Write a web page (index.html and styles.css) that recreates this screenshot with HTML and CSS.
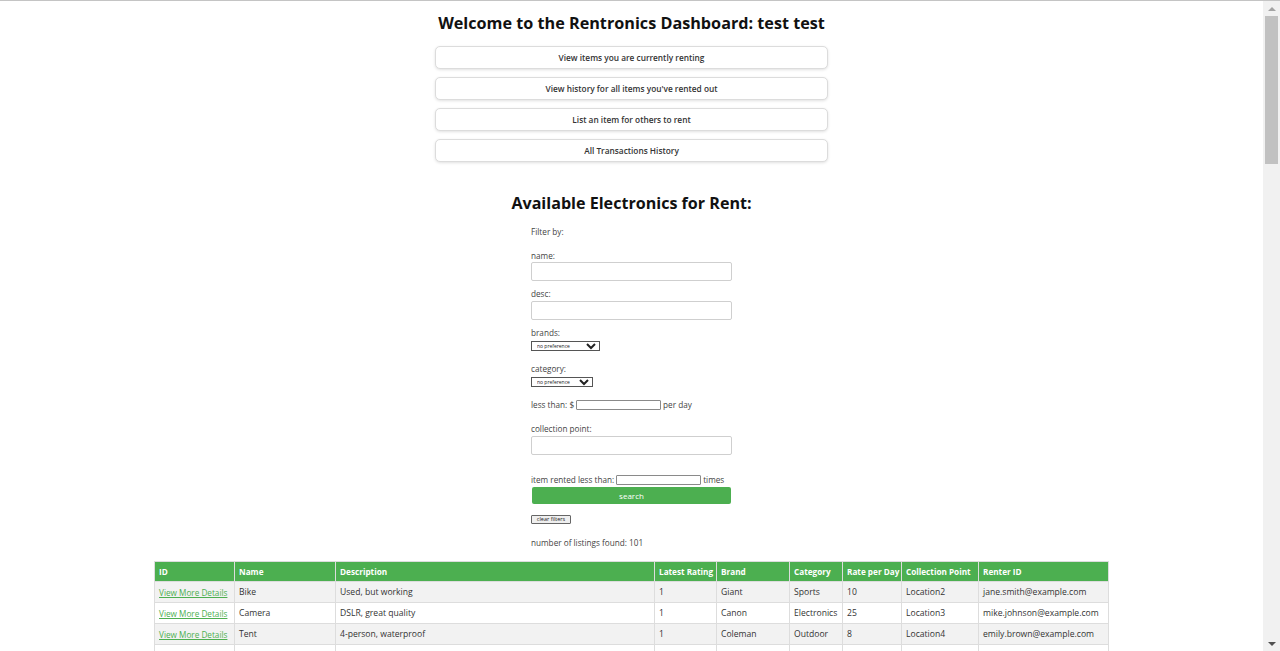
FILE: index.html
```html
<!DOCTYPE html>
<html lang="en">
<head>
<meta charset="utf-8">
<title>Rentronics Dashboard</title>
<link rel="stylesheet" href="styles.css">
</head>
<body>
<div class="page">
  <h1 class="title">Welcome to the Rentronics Dashboard: test test</h1>
  <div class="nav">
    <button class="nav-btn">View items you are currently renting</button>
    <button class="nav-btn">View history for all items you've rented out</button>
    <button class="nav-btn">List an item for others to rent</button>
    <button class="nav-btn">All Transactions History</button>
  </div>
  <h2 class="subtitle">Available Electronics for Rent:</h2>
  <form class="filters">
    <div class="filter-title">Filter by:</div>
    <div class="lbl g-name">name:</div>
    <input class="txt" type="text">
    <div class="lbl g-desc">desc:</div>
    <input class="txt" type="text">
    <div class="lbl g-brands">brands:</div>
    <select class="sel sel-brands"><option>no preference</option></select>
    <div class="lbl g-cat">category:</div>
    <select class="sel sel-cat"><option>no preference</option></select>
    <div class="row g-less">less than: $ <input class="small" type="text"> per day</div>
    <div class="lbl g-coll">collection point:</div>
    <input class="txt" type="text">
    <div class="row g-item">item rented less than: <input class="small" type="text"> times</div>
    <button type="button" class="search">search</button>
    <div class="clear-wrap"><button type="button" class="clear">clear filters</button></div>
    <div class="count">number of listings found: 101</div>
  </form>
  <table class="listings">
    <colgroup>
      <col class="c-id"><col class="c-name"><col class="c-desc"><col class="c-rate"><col class="c-brand"><col class="c-cat"><col class="c-day"><col class="c-coll"><col class="c-renter">
    </colgroup>
    <thead>
      <tr><th>ID</th><th>Name</th><th>Description</th><th>Latest Rating</th><th>Brand</th><th>Category</th><th>Rate per Day</th><th>Collection Point</th><th>Renter ID</th></tr>
    </thead>
    <tbody>
      <tr><td><a href="#">View More Details</a></td><td>Bike</td><td>Used, but working</td><td>1</td><td>Giant</td><td>Sports</td><td>10</td><td>Location2</td><td>jane.smith@example.com</td></tr>
      <tr><td><a href="#">View More Details</a></td><td>Camera</td><td>DSLR, great quality</td><td>1</td><td>Canon</td><td>Electronics</td><td>25</td><td>Location3</td><td>mike.johnson@example.com</td></tr>
      <tr><td><a href="#">View More Details</a></td><td>Tent</td><td>4-person, waterproof</td><td>1</td><td>Coleman</td><td>Outdoor</td><td>8</td><td>Location4</td><td>emily.brown@example.com</td></tr>
      <tr><td><a href="#">View More Details</a></td><td>Laptop</td><td>Fast, 16GB RAM</td><td>1</td><td>Dell</td><td>Electronics</td><td>30</td><td>Location5</td><td>john.doe@example.com</td></tr>
    </tbody>
  </table>
</div>
<div class="scrollbar">
  <div class="sb-btn"><span class="arrow-up"></span></div>
  <div class="sb-thumb"></div>
  <div class="sb-track"></div>
  <div class="sb-btn"><span class="arrow-down"></span></div>
</div>
</body>
</html>
```

FILE: styles.css
```css
* { box-sizing: border-box; }
html, body { margin: 0; padding: 0; }
body {
  height: 100vh;
  overflow: hidden;
  display: flex;
  border-top: 1px solid #c4c4c4;
  background: #fff;
  font-family: "Open Sans", "Liberation Sans", sans-serif;
  color: #333;
}
.page {
  flex: 1;
  min-width: 0;
  overflow: hidden;
  display: flex;
  flex-direction: column;
  align-items: center;
}
.title {
  margin: 11px 0 0;
  font-size: 16.2px;
  line-height: 22px;
  font-weight: 700;
  color: #111;
}
.nav {
  margin-top: 12px;
  display: flex;
  flex-direction: column;
  gap: 8px;
}
.nav-btn {
  width: 393px;
  height: 23px;
  background: #fff;
  border: 1px solid #dcdcdc;
  border-radius: 5px;
  box-shadow: 0 1px 3px rgba(0,0,0,0.12);
  font-family: inherit;
  font-size: 8.3px;
  font-weight: 600;
  color: #333;
  padding: 0;
}
.subtitle {
  margin: 30px 0 0;
  font-size: 16.1px;
  line-height: 22px;
  font-weight: 700;
  color: #111;
}
.filters {
  width: 201px;
  display: flex;
  flex-direction: column;
  align-items: flex-start;
  font-size: 8.2px;
  color: #444;
}
.filter-title, .lbl, .row, .count { line-height: 12px; height: 12px; white-space: nowrap; }
.filter-title { margin-top: 12px; }
.g-name { margin-top: 12px; }
.g-desc { margin-top: 7px; }
.g-brands { margin-top: 7px; }
.g-cat { margin-top: 12px; }
.g-less { margin-top: 12px; display: flex; align-items: center; gap: 2px; }
.g-coll { margin-top: 12px; }
.g-item { margin-top: 19px; display: flex; align-items: center; gap: 2px; }
.txt {
  width: 201px;
  height: 19px;
  border: 1px solid #cfcfcf;
  border-radius: 2px;
  background: #fff;
  margin: 0;
}
.g-desc + .txt { margin-top: 1px; }
.g-coll + .txt { margin-top: 1px; }
.sel {
  margin-top: 2px;
  height: 10px;
  font-family: inherit;
  font-size: 5px;
  padding: 0 1px;
  border: 1px solid #555;
  border-radius: 0;
  background: #fff;
  color: #222;
}
.sel-brands { width: 69px; }
.sel-cat { width: 62px; }
.small {
  width: 85px;
  height: 10px;
  border: 1px solid #8a8a8a;
  border-radius: 1px;
  margin: 0;
  padding: 0;
}
.search {
  margin-top: 1px;
  margin-left: 1px;
  width: 199px;
  height: 17px;
  background: #4caf50;
  color: #fff;
  border: none;
  border-radius: 2px;
  font-family: inherit;
  font-size: 8px;
  padding: 0;
}
.clear-wrap { margin-top: 11px; height: 9px; display: flex; }
.clear {
  width: 40px;
  height: 9px;
  padding: 0;
  font-family: inherit;
  font-size: 5.5px;
  line-height: 7px;
  border: 1px solid #666;
  border-radius: 1px;
  background: #efefef;
  color: #222;
}
.count { margin-top: 13px; }
.listings {
  margin-top: 12px;
  width: 954px;
  border-collapse: collapse;
  table-layout: fixed;
  font-size: 8.6px;
  color: #333;
}
.c-id { width: 80px; }
.c-name { width: 101px; }
.c-desc { width: 319px; }
.c-rate { width: 62px; }
.c-brand { width: 73px; }
.c-cat { width: 53px; }
.c-day { width: 59px; }
.c-coll { width: 77px; }
.c-renter { width: 130px; }
.listings th {
  background: #4caf50;
  color: #fff;
  text-align: left;
  font-weight: 700;
  font-size: 8.2px;
  height: 20px;
  padding: 0 4px;
  border: 1px solid #ddd;
  white-space: nowrap;
  overflow: hidden;
}
.listings td {
  height: 21px;
  padding: 0 4px;
  border: 1px solid #ddd;
  white-space: nowrap;
  overflow: hidden;
}
.listings td:first-child { font-size: 8.2px; }
.listings tbody tr:nth-child(odd) { background: #f2f2f2; }
.listings a { color: #4caf50; text-decoration: underline; }
.scrollbar {
  width: 17px;
  flex: none;
  background: #f1f1f1;
  display: flex;
  flex-direction: column;
  align-items: center;
}
.sb-btn {
  height: 15px;
  width: 17px;
  display: flex;
  align-items: center;
  justify-content: center;
}
.arrow-up { width: 0; height: 0; border-left: 4px solid transparent; border-right: 4px solid transparent; border-bottom: 4px solid #a3a3a3; }
.arrow-down { width: 0; height: 0; border-left: 4px solid transparent; border-right: 4px solid transparent; border-top: 4px solid #505050; }
.sb-thumb { width: 13px; height: 148px; background: #c1c1c1; }
.sb-track { flex: 1; }
```
